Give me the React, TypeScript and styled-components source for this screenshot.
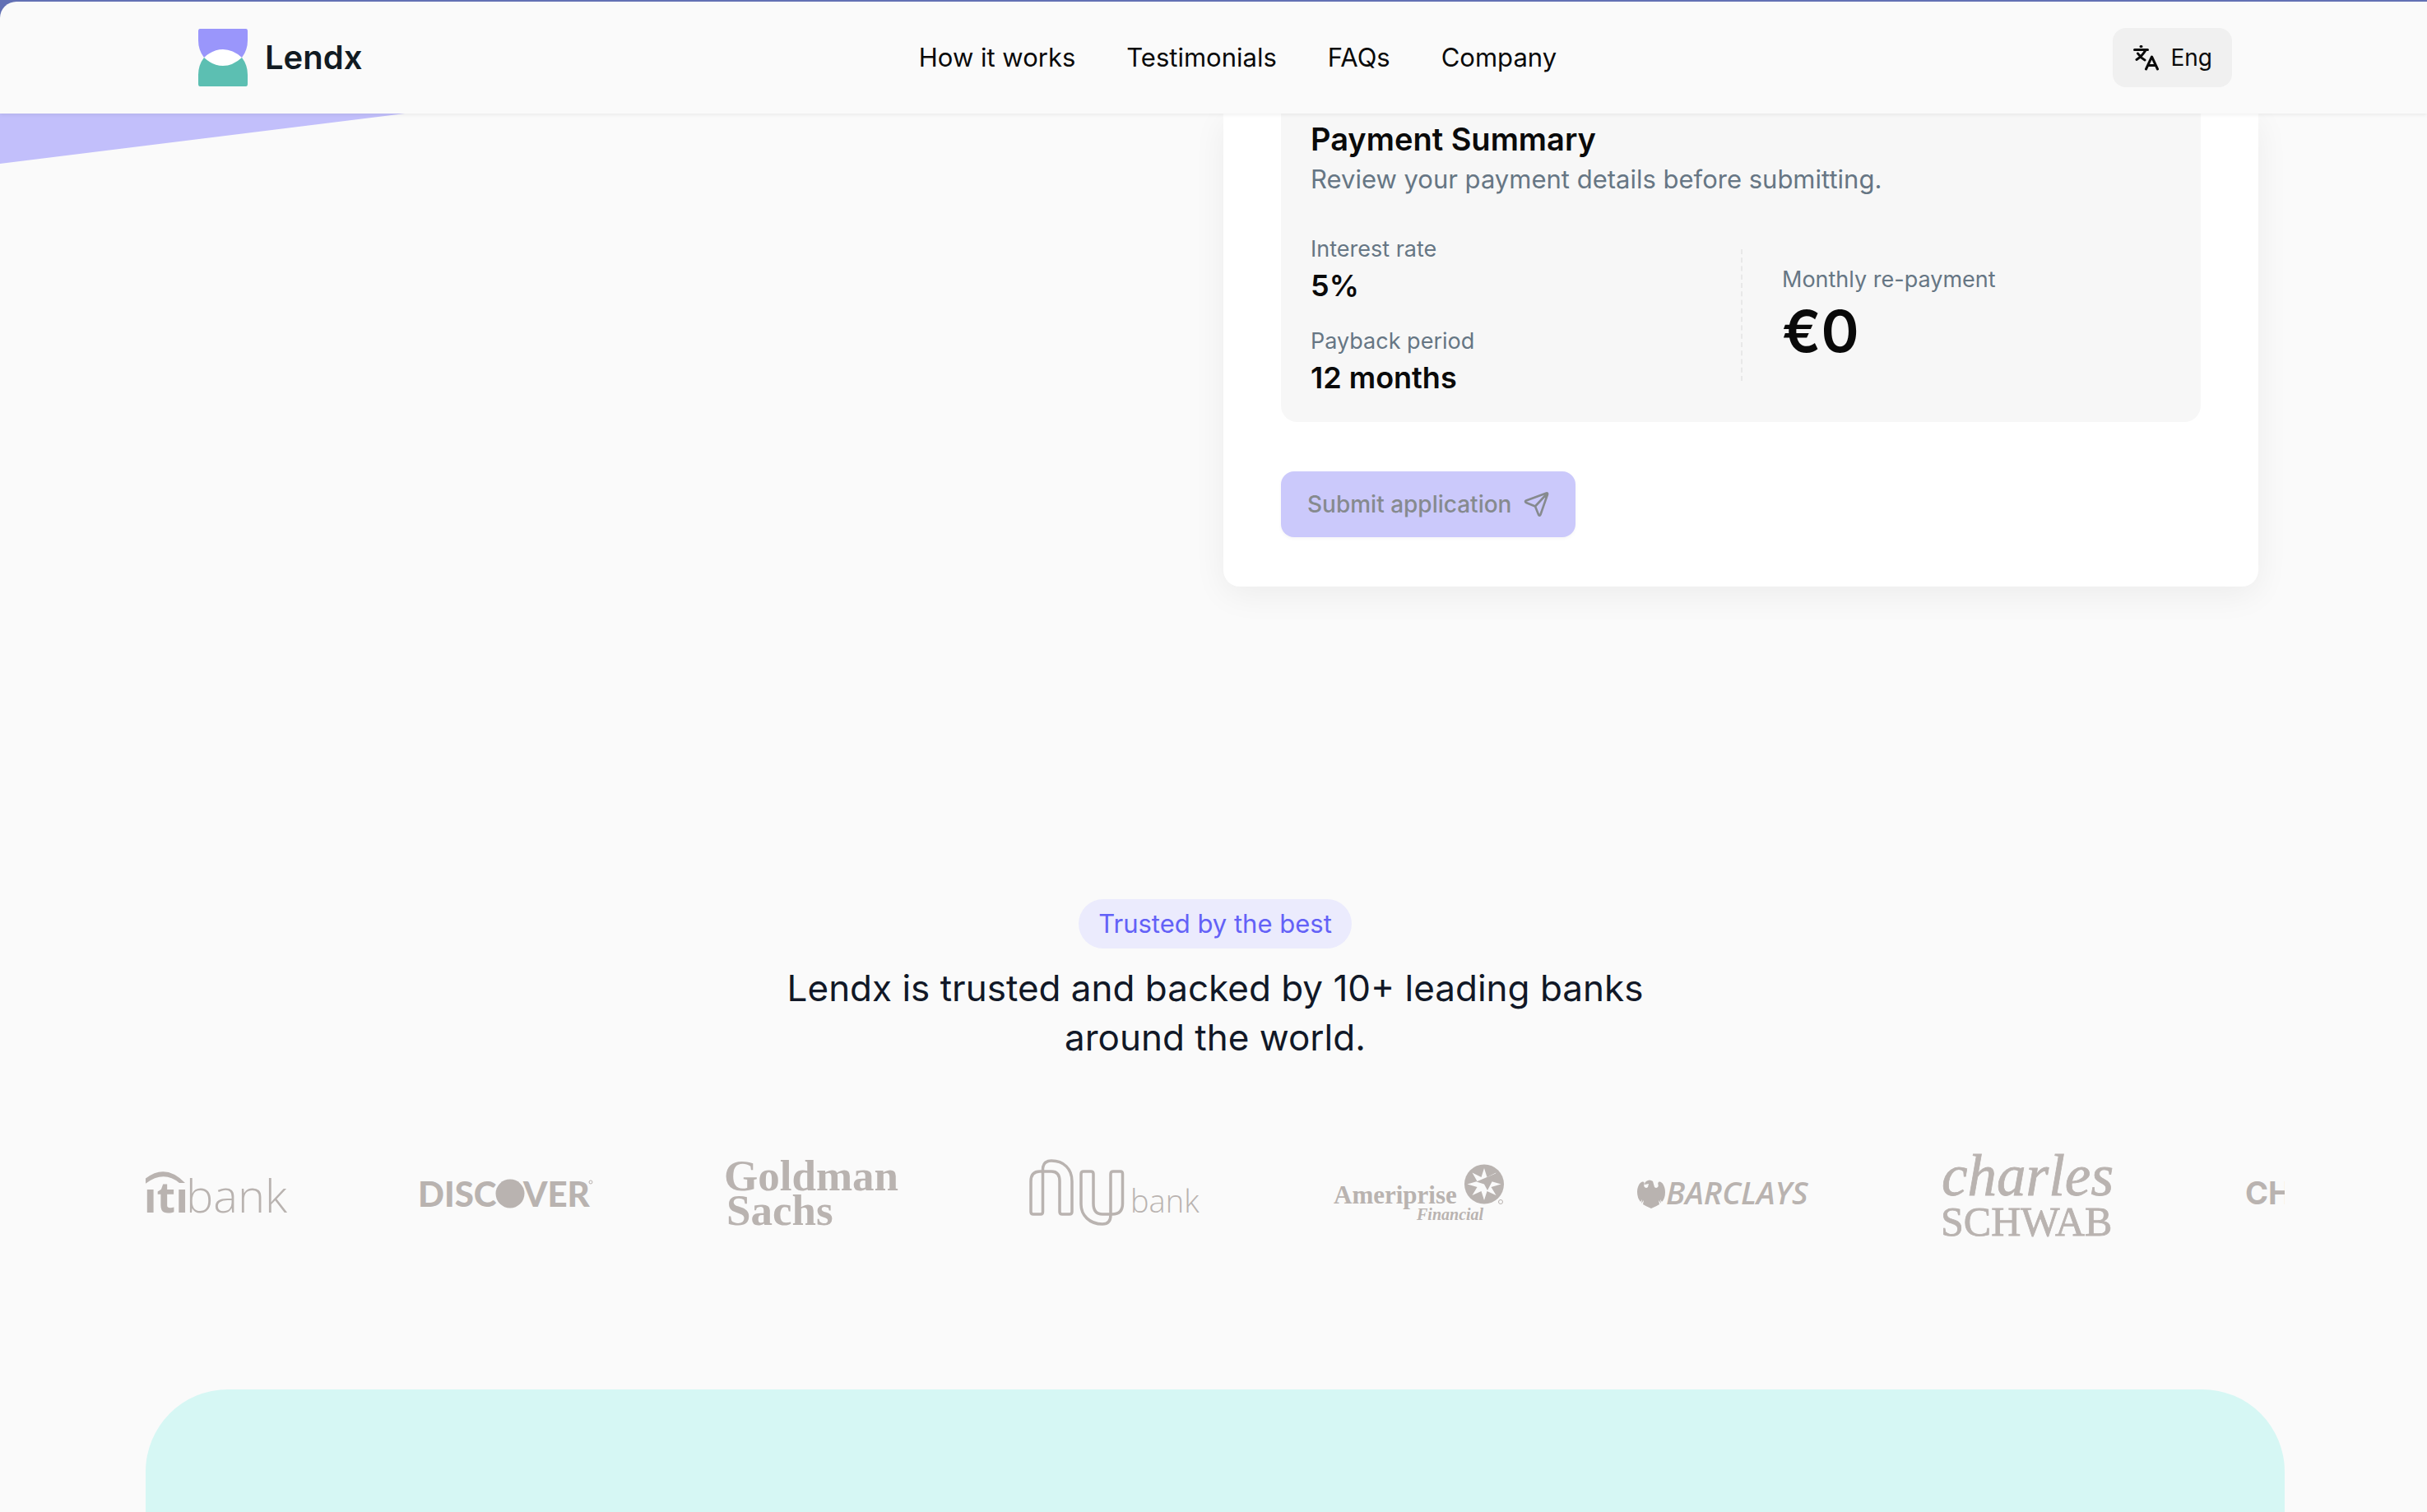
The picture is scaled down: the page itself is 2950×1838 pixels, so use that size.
import React from "react";
import styled, { createGlobalStyle } from "styled-components";

const GlobalStyle = createGlobalStyle`
  *, *::before, *::after { box-sizing: border-box; }
  body {
    margin: 0;
    background: #fafafa;
    color: #0a0a0a;
    font-family: Inter, "Liberation Sans", sans-serif;
    overflow: hidden;
  }
  h1, h2, p, dl, dd, ul { margin: 0; padding: 0; }
`;

const Page = styled.div`
  position: relative;
  height: 100vh;
  overflow: hidden;
`;

const Backdrop = styled.div`
  position: relative;
  z-index: 2;
  background: #6270b4;
  padding-top: 2px;
  box-shadow: 0 2px 4px rgba(0, 0, 0, 0.06);
`;

const Header = styled.header`
  display: flex;
  align-items: center;
  justify-content: space-between;
  height: 136px;
  padding: 0 237px 0 240px;
  background: #fafafa;
  border-top-left-radius: 20px;
`;

const Brand = styled.a`
  display: flex;
  align-items: center;
  gap: 20px;
  color: #111b22;
  font-size: 40px;
  line-height: 48px;
  font-weight: 600;
  text-decoration: none;
`;

const Nav = styled.nav`
  display: flex;
  gap: 62px;
`;

const NavLink = styled.a`
  color: #0a0a0a;
  font-size: 31px;
  line-height: 40px;
  text-decoration: none;
`;

const LanguageButton = styled.button`
  display: flex;
  align-items: center;
  gap: 14px;
  height: 72px;
  padding: 0 24px;
  border: 0;
  border-radius: 16px;
  background: #f0f0f0;
  color: #0a0a0a;
  font: inherit;
  font-size: 28px;
`;

const Hero = styled.section`
  position: relative;
  display: grid;
  grid-template-columns: 1fr 1fr;
  gap: 24px;
  padding: 0 205px;
`;

const Slant = styled.svg`
  position: absolute;
  left: 0;
  top: 0;
`;

const Card = styled.form`
  grid-column: 2;
  padding: 0 70px 60px;
  border-radius: 0 0 20px 20px;
  background: #fff;
  box-shadow: 0 10px 40px rgba(0, 0, 0, 0.06);
`;

const Summary = styled.div`
  padding: 6px 36px 30px;
  border-radius: 0 0 20px 20px;
  background: #f7f7f7;
`;

const SummaryTitle = styled.h2`
  font-size: 38px;
  line-height: 50px;
  font-weight: 600;
`;

const SummaryText = styled.p`
  color: #667684;
  font-size: 31px;
  line-height: 48px;
`;

const Figures = styled.div`
  display: grid;
  grid-template-columns: 1fr 1fr;
  align-items: center;
  margin-top: 41px;
`;

const FigureList = styled.dl`
  display: flex;
  flex-direction: column;
  gap: 24px;
`;

const Repayment = styled.dl`
  display: flex;
  flex-direction: column;
  justify-content: center;
  height: 160px;
  padding-left: 48px;
  border-left: 2px dashed #e8e8e8;
`;

const Label = styled.dt`
  color: #667684;
  font-size: 27px;
  line-height: 40px;
`;

const Value = styled.dd<{ $large?: boolean }>`
  font-size: ${(p) => (p.$large ? 70 : 36)}px;
  line-height: ${(p) => (p.$large ? 86 : 48)}px;
  font-weight: 600;
`;

const SubmitButton = styled.button`
  display: flex;
  align-items: center;
  gap: 14px;
  height: 80px;
  margin-top: 60px;
  padding: 0 32px;
  border: 0;
  border-radius: 16px;
  background: #cbc9fb;
  color: #868a8e;
  font: inherit;
  font-size: 28px;
  font-weight: 500;
  box-shadow: 0 2px 4px rgba(0, 0, 0, 0.04);
`;

const Trusted = styled.section`
  display: flex;
  flex-direction: column;
  align-items: center;
  margin: 380px 173px 0 177px;
`;

const Badge = styled.p`
  padding: 0 24px;
  border-radius: 30px;
  background: #ebebfd;
  color: #6361f7;
  font-size: 31px;
  line-height: 60px;
`;

const TrustedTitle = styled.h1`
  max-width: 1100px;
  margin-top: 18px;
  color: #111827;
  font-size: 44px;
  line-height: 60px;
  font-weight: 400;
  text-align: center;
`;

const Strip = styled.div`
  margin: 99px 173px 0 177px;
  padding-bottom: 16px;
  overflow: hidden;
`;

const LogoList = styled.ul`
  display: flex;
  gap: 160px;
  width: max-content;
  margin-left: -37px;
  list-style: none;
`;

const LogoItem = styled.li`
  width: 210px;
  height: 120px;
`;

const LogoSvg = styled.svg`
  display: block;
  overflow: visible;
  fill: #b9b3b0;
`;

const MintSection = styled.section`
  height: 400px;
  margin: 163px 173px 0 177px;
  border-radius: 100px 100px 0 0;
  background: #d6f7f4;
`;

const sans = '"Open Sans", "Liberation Sans", sans-serif';
const serif = '"Liberation Serif", serif';

function BrandMark() {
  return (
    <svg width="62" height="70" viewBox="0 0 62 70" aria-hidden="true">
      <path d="M8 35Q31 12 54 35Q31 58 8 35Z" fill="#fff" />
      <path d="M3 0H59Q61 0 61 3V14Q61 26 54 35Q43 25 31 25T8 35Q1 26 1 14V3Q1 0 3 0Z" fill="#9a96fb" />
      <path d="M3 70H59Q61 70 61 67V56Q61 44 54 35Q43 45 31 45T8 35Q1 44 1 56V67Q1 70 3 70Z" fill="#5cbfb2" />
    </svg>
  );
}

function TranslateIcon() {
  return (
    <svg width="32" height="32" viewBox="0 0 32 32" fill="none" stroke="#0a0a0a" strokeWidth="3" strokeLinecap="round" strokeLinejoin="round" aria-hidden="true">
      <path d="M10 2.500h1M2.500 6.500h16M16 7C13 12 9 16 5 18.500M6.500 11c2 3 5 6 8.500 8M16.500 30l7-15 7 15M18.500 25.500h9" />
    </svg>
  );
}

function SendIcon() {
  return (
    <svg width="32" height="32" viewBox="0 0 32 32" fill="none" stroke="#868a8e" strokeWidth="2.600" strokeLinecap="round" strokeLinejoin="round" aria-hidden="true">
      <path d="M28.500 2.500L4 11.500Q2 12.500 4 14L15 18.500L19 28.500Q20.500 31 21.500 28.500L30 4Q30.500 2 28.500 2.500ZM29.500 3L15 18.500" />
    </svg>
  );
}

function Logo({ name, children }: { name: string; children: React.ReactNode }) {
  return (
    <LogoItem>
      <LogoSvg width="210" height="120" viewBox="0 0 210 120" role="img" aria-label={name}>
        {children}
      </LogoSvg>
    </LogoItem>
  );
}

function BankLogos() {
  return (
    <LogoList>
      <Logo name="Citibank">
        <path d="M34 45Q60 22 85 48H78Q58 31 34 51Z" />
        <text x="8" y="84" fontFamily={sans} fontSize="52" fontWeight="700">cıtı</text>
        <text x="86" y="84" fontFamily={sans} fontSize="56" fontWeight="300">bank</text>
      </Logo>
      <Logo name="Discover">
        <text x="-2" y="77" fontFamily="Lato, sans-serif" fontSize="42" fontWeight="900">DISC</text>
        <circle cx="110" cy="61" r="17.500" />
        <text x="126" y="77" fontFamily="Lato, sans-serif" fontSize="42" fontWeight="900">VER</text>
        <circle cx="208" cy="47" r="2" fill="none" stroke="#b9b3b0" />
      </Logo>
      <Logo name="Goldman Sachs">
        <text x="0" y="57" fontFamily={serif} fontSize="53" fontWeight="700">Goldman</text>
        <text x="3" y="99" fontFamily={serif} fontSize="53" fontWeight="700">Sachs</text>
      </Logo>
      <Logo name="Nubank">
        <path
          d="M17.500 83V32Q17.500 21 28 21C43 21 53 31 53 46V83Q53 86 50 86H41Q38 86 38 83V46Q38 34 28 34H14Q3 34 3 46V83Q3 86 6 86H15Q17.500 86 17.500 83Z"
          fill="none" stroke="#b9b3b0" strokeWidth="3.500"
        />
        <path
          d="M100 37V87Q100 98 90 98C74 98 64 87 64 74V37Q64 34 67 34H76Q79 34 79 37V73Q79 86 90 86H102Q114.500 86 114.500 73V37Q114.500 34 112 34H103Q100 34 100 37Z"
          fill="none" stroke="#b9b3b0" strokeWidth="3.500"
        />
        <text x="124" y="84" fontFamily={sans} fontSize="38" fontWeight="300">bank</text>
      </Logo>
      <Logo name="Ameriprise Financial">
        <text x="1" y="73" fontFamily={serif} fontSize="31" fontWeight="700">Ameriprise</text>
        <text x="102" y="93" fontFamily={serif} fontSize="20" fontWeight="700" fontStyle="italic">Financial</text>
        <circle cx="184" cy="49.500" r="24" />
        <path
          d="M184 30L187.500 41L198.500 35.500L192.500 46L204.500 49.500L192.500 53L198.500 63L187.500 58L184 69L180.500 58L169.500 63L175.500 53L163.500 49.500L175.500 46L169.500 35.500L180.500 41Z"
          fill="#fafafa"
        />
        <path d="M199 36L174.500 46.500L184 49.500L188 57Z" />
        <circle cx="204" cy="71" r="2.500" fill="none" stroke="#b9b3b0" />
      </Logo>
      <Logo name="Barclays">
        <path d="M11 46q4-3 8 0l2 7q2 2 4 0c2-2-1-4 1-6 3-2 8 4 8 12q0 8-4 12l-2-3 1 5-3-4 1 5q-3 2-10 5-7-3-10-5l1-5-3 4 1-5-2 3Q0 66 0 59C0 51 5 45 8 47c2 2-1 4 1 6q2 2 4 0l1-4-5 1q0-3 2-4z" />
        <text x="35" y="74" fontFamily={sans} fontSize="38" fontWeight="600" fontStyle="italic">BARCLAYS</text>
      </Logo>
      <Logo name="Charles Schwab">
        <text x="0" y="63" fontFamily={serif} fontSize="71" fontStyle="italic" stroke="#b9b3b0" strokeWidth="0.800">charles</text>
        <text x="-1" y="112" fontFamily={serif} fontSize="50" stroke="#b9b3b0" strokeWidth="0.800">SCHWAB</text>
      </Logo>
      <Logo name="Chase">
        <text x="-1" y="74" fontFamily="Inter, sans-serif" fontSize="38" fontWeight="700">CHASE</text>
      </Logo>
    </LogoList>
  );
}

export default function App() {
  return (
    <Page>
      <GlobalStyle />
      <Backdrop>
        <Header>
          <Brand href="#">
            <BrandMark />
            Lendx
          </Brand>
          <Nav>
            <NavLink href="#how">How it works</NavLink>
            <NavLink href="#testimonials">Testimonials</NavLink>
            <NavLink href="#faqs">FAQs</NavLink>
            <NavLink href="#company">Company</NavLink>
          </Nav>
          <LanguageButton type="button">
            <TranslateIcon />
            Eng
          </LanguageButton>
        </Header>
      </Backdrop>
      <Hero>
        <Slant width="492" height="62" viewBox="0 0 492 62" aria-hidden="true">
          <path d="M0 0H492L0 61Z" fill="#c2bffb" />
        </Slant>
        <Card>
          <Summary>
            <SummaryTitle>Payment Summary</SummaryTitle>
            <SummaryText>Review your payment details before submitting.</SummaryText>
            <Figures>
              <FigureList>
                <div>
                  <Label>Interest rate</Label>
                  <Value>5%</Value>
                </div>
                <div>
                  <Label>Payback period</Label>
                  <Value>12 months</Value>
                </div>
              </FigureList>
              <Repayment>
                <Label>Monthly re-payment</Label>
                <Value $large>€0</Value>
              </Repayment>
            </Figures>
          </Summary>
          <SubmitButton type="submit" disabled>
            Submit application
            <SendIcon />
          </SubmitButton>
        </Card>
      </Hero>
      <Trusted>
        <Badge>Trusted by the best</Badge>
        <TrustedTitle>Lendx is trusted and backed by 10+ leading banks around the world.</TrustedTitle>
      </Trusted>
      <Strip>
        <BankLogos />
      </Strip>
      <MintSection />
    </Page>
  );
}
